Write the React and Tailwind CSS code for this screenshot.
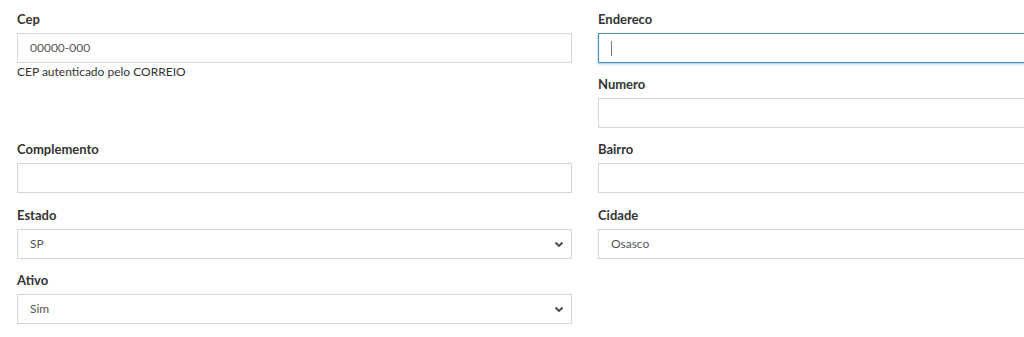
const Field = ({ label, children, extra, className = "" }) => (
  <div className={className}>
    <label className="block h-[18px] leading-[18px] mb-[5px] text-[13px] font-bold text-[#333]">
      {label}
    </label>
    {children}
    {extra}
  </div>
);

const TextBox = ({ value, focused }) => (
  <div
    className={
      "relative h-[30px] flex items-center px-[12px] bg-white text-[12px] text-[#555] border " +
      (focused
        ? "border-[#4a90c8] shadow-[0_1px_2px_rgba(102,175,233,0.7)]"
        : "border-[#d2d6de]")
    }
  >
    {value}
    {focused && <span className="block w-px h-[15px] bg-[#777]" />}
  </div>
);

const SelectBox = ({ value }) => (
  <div className="h-[30px] flex items-center justify-between pl-[12px] pr-[7px] bg-white text-[12px] text-[#555] border border-[#d2d6de]">
    <span>{value}</span>
    <svg width="10" height="7" viewBox="0 0 10 7" className="mt-px">
      <polyline points="1.5,1.5 5,5 8.5,1.5" fill="none" stroke="#444" strokeWidth="1.8" />
    </svg>
  </div>
);

const App = () => {
  return (
    <div
      className="w-[1024px] h-[337px] overflow-hidden bg-white"
      style={{ fontFamily: "Lato, 'Open Sans', sans-serif" }}
    >
      <div className="pl-[17px] pt-[10px] grid grid-cols-[555px_555px] gap-x-[26px] gap-y-[12px]">
        <Field
          label="Cep"
          className="row-span-2"
          extra={<p className="mt-[1px] text-[12px] leading-[16px] text-[#333]">CEP autenticado pelo CORREIO</p>}
        >
          <TextBox value="00000-000" />
        </Field>
        <Field label="Endereco">
          <TextBox focused />
        </Field>
        <Field label="Numero">
          <TextBox />
        </Field>
        <Field label="Complemento">
          <TextBox />
        </Field>
        <Field label="Bairro">
          <TextBox />
        </Field>
        <Field label="Estado" className="mt-[1px]">
          <SelectBox value="SP" />
        </Field>
        <Field label="Cidade" className="mt-[1px]">
          <TextBox value="Osasco" />
        </Field>
        <Field label="Ativo">
          <SelectBox value="Sim" />
        </Field>
      </div>
    </div>
  );
};

export default App;
